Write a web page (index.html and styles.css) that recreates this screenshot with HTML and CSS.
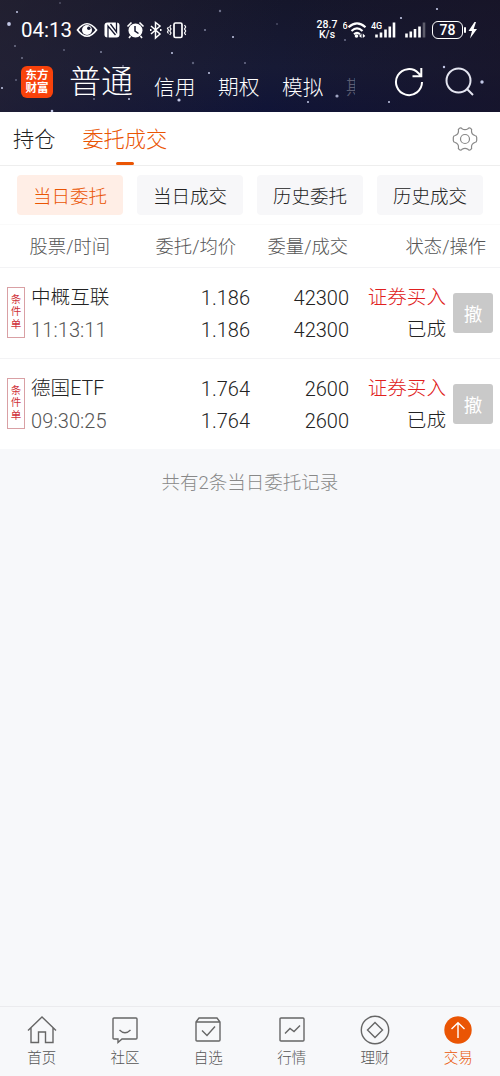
FILE: index.html
```
<!DOCTYPE html>
<html lang="zh-CN">
<head>
    <meta charset="UTF-8">
    <meta name="viewport" content="width=device-width, initial-scale=1.0">
    <title>委托成交</title>
    <link rel="stylesheet" href="styles.css">
</head>
<body>
    <div class="app">
        <header class="header">
            <svg class="stars" width="500" height="112" fill="#c3c8e6">
                <circle cx="9" cy="24" r="1.9"/><circle cx="17" cy="12" r="1"/><circle cx="60" cy="3" r=".8" opacity=".5"/>
                <circle cx="15" cy="46" r="1" opacity=".5"/><circle cx="2" cy="88" r="1"/><circle cx="172" cy="53" r="1"/>
                <circle cx="101" cy="52" r="1" opacity=".6"/><circle cx="205" cy="30" r="1" opacity=".6"/><circle cx="233" cy="37" r="1"/>
                <circle cx="220" cy="11" r="1.2" opacity=".5"/><circle cx="193" cy="63" r="1.2" opacity=".4"/><circle cx="209" cy="73" r="1"/>
                <circle cx="179" cy="100" r="1.6"/><circle cx="129" cy="99" r="1"/><circle cx="94" cy="99" r="1" opacity=".5"/>
                <circle cx="52" cy="111" r="1.3"/><circle cx="64" cy="50" r="1" opacity=".4"/><circle cx="245" cy="63" r="1" opacity=".5"/>
                <circle cx="437" cy="9" r="1.1"/><circle cx="401" cy="18" r="1.1"/><circle cx="444" cy="67" r="1.2"/>
                <circle cx="482" cy="82" r="1.7"/><circle cx="337" cy="96" r="1.6" opacity=".8"/><circle cx="308" cy="102" r="1"/>
                <circle cx="389" cy="102" r="1"/><circle cx="345" cy="40" r="1" opacity=".5"/><circle cx="277" cy="24" r="1" opacity=".3"/>
                <circle cx="22" cy="58" r="1" opacity=".5"/><circle cx="16" cy="80" r="1" opacity=".4"/><circle cx="123" cy="66" r="1" opacity=".5"/>
            </svg>
            <div class="status-bar">
                <span class="clock">04:13</span>
                <svg class="status-left" width="112" height="20" viewBox="0 0 112 20" fill="none" stroke="#fff">
                    <path d="M1.500 10Q11 -2.500 20.500 10Q11 22.500 1.500 10Z" stroke-width="1.700"/>
                    <circle cx="11" cy="10" r="5" fill="#fff" stroke="none"/><circle cx="12.800" cy="8.200" r="1.700" fill="#15172f" stroke="none"/>
                    <rect x="28.500" y="2.500" width="15" height="15" rx="3" fill="#fff" stroke="none"/>
                    <path d="M32 18V6l7.500 9M34.500 4l6 8V2" stroke="#15172f" stroke-width="1.300"/>
                    <circle cx="59.500" cy="10.500" r="7" fill="#fff" stroke="none"/>
                    <path d="M59 6v5l3.500 2.500" stroke="#15172f" stroke-width="1.500"/>
                    <path d="M51.500 6.500l4-4M67.500 6.500l-4-4M54.500 16l-1.500 2M64.500 16l1.500 2" stroke-width="1.600"/>
                    <path d="M75 6l9 8-4.500 4V2.500L84 6l-9 8" stroke-width="1.500"/>
                    <path d="M74 10h1.500M84 10h1.500" stroke-width="1.800"/>
                    <rect x="98" y="3" width="8" height="14.500" rx="1.500" stroke-width="1.700"/>
                    <path d="M95 5l-1.200 2 1.200 2-1.200 2 1.200 2-1.200 2M92.500 7l-1 1.500 1 1.500-1 2 1 1.500M108.500 5l1.200 2-1.200 2 1.200 2-1.200 2 1.200 2" stroke-width="1.200"/>
                </svg>
                <div class="net-speed"><span>28.7</span><span>K/s</span></div>
                <svg class="status-signal" width="84" height="22" viewBox="0 0 84 22" fill="none" stroke="#fff">
                    <text x="-.5" y="9.500" class="tiny">6</text>
                    <path d="M5.500 8.200Q14 .5 22.500 8.200M8.500 12Q14 6.700 19.500 12M11 15.200Q14 12.500 17 15.200" stroke-width="2.100"/>
                    <circle cx="13.500" cy="17" r="1.800" fill="#fff" stroke="none"/>
                    <path d="M18.500 14.500l-2.500 2.500 2.500 2zM19.800 14.500l2.500 2.500-2.500 2z" fill="#fff" stroke="none"/>
                    <text x="28" y="10" class="tiny">4G</text>
                    <path d="M33.500 18.500v-3M38 18.500v-5M42.500 18.500v-8M46.800 18.500v-11M51 18.500v-15M63.500 18.500v-4M67.800 18.500v-6M72 18.500v-8.500M76.500 18.500v-11" stroke-width="2.600"/>
                    <path d="M81 18.500v-15" stroke-width="2.600" opacity=".3"/>
                </svg>
                <div class="battery">78</div>
                <svg class="charging" width="14" height="20" viewBox="0 0 14 20" fill="#fff">
                    <rect x="0" y="7" width="2" height="6" rx="1"/>
                    <path d="M10.500 2L4.500 11h3.500l-2 7.500L13 9H9.700L12 2z"/>
                </svg>
            </div>
            <nav class="account-nav">
                <div class="logo"><span>东方</span><span>财富</span></div>
                <a class="account account-active">普通</a>
                <a class="account">信用</a>
                <a class="account">期权</a>
                <a class="account">模拟</a>
                <a class="account account-cut">期</a>
                <svg class="refresh" width="30" height="30" viewBox="0 0 30 30" fill="none" stroke="#fff" stroke-width="2">
                    <path d="M28 15A13 13 0 1 1 24.500 6.200L27 8.800M27.300 1v8.300H18.500"/>
                </svg>
                <svg class="search" width="30" height="30" viewBox="0 0 30 30" fill="none" stroke="#e4e5f0" stroke-width="2">
                    <circle cx="13.500" cy="13.500" r="12"/><path d="M22 22l6 6"/>
                </svg>
            </nav>
        </header>

        <nav class="tabs">
            <a class="tab">持仓</a>
            <a class="tab tab-active">委托成交</a>
            <svg class="settings" width="26" height="26" viewBox="0 0 26 26" fill="none" stroke="#888" stroke-width="1.200" stroke-linejoin="round">
                <path d="M7.500 2.200Q9 1.300 10 2.700Q13 4.700 16 2.700Q17 1.300 18.500 2.200Q20.300 3.300 19.500 5Q19.500 8.300 22.800 9.500Q24.700 9.700 24.700 11.500V14.500Q24.700 16.300 22.800 16.500Q19.500 17.700 19.500 21Q20.300 22.700 18.500 23.800Q17 24.700 16 23.300Q13 21.300 10 23.300Q9 24.700 7.500 23.800Q5.700 22.700 6.500 21Q6.500 17.700 3.200 16.500Q1.300 16.300 1.300 14.500V11.500Q1.300 9.700 3.200 9.500Q6.500 8.300 6.500 5Q5.700 3.300 7.500 2.200Z"/>
                <circle cx="13" cy="13" r="4.500"/>
            </svg>
        </nav>

        <div class="filters">
            <button class="filter filter-active">当日委托</button>
            <button class="filter">当日成交</button>
            <button class="filter">历史委托</button>
            <button class="filter">历史成交</button>
        </div>

        <div class="list-head">
            <span>股票/时间</span>
            <span>委托/均价</span>
            <span>委量/成交</span>
            <span>状态/操作</span>
        </div>

        <div class="order">
            <div class="tag"><span>条</span><span>件</span><span>单</span></div>
            <div class="cell name"><span>中概互联</span><span class="time">11:13:11</span></div>
            <div class="cell"><span>1.186</span><span>1.186</span></div>
            <div class="cell"><span>42300</span><span>42300</span></div>
            <div class="cell status"><span class="buy">证券买入</span><span>已成</span></div>
            <button class="cancel">撤</button>
        </div>
        <div class="order">
            <div class="tag"><span>条</span><span>件</span><span>单</span></div>
            <div class="cell name"><span>德国ETF</span><span class="time">09:30:25</span></div>
            <div class="cell"><span>1.764</span><span>1.764</span></div>
            <div class="cell"><span>2600</span><span>2600</span></div>
            <div class="cell status"><span class="buy">证券买入</span><span>已成</span></div>
            <button class="cancel">撤</button>
        </div>

        <p class="summary">共有2条当日委托记录</p>

        <nav class="bottom-nav">
            <a class="nav-item">
                <svg width="30" height="30" viewBox="0 0 30 30"><path d="M1 15.500L15 2l14 13.500M4 13v14.500h7.500V17h7v10.500H26V13"/></svg>
                <span>首页</span>
            </a>
            <a class="nav-item">
                <svg width="30" height="30" viewBox="0 0 30 30"><path d="M4 3h22q1 0 1 1v19q0 1-1 1H12l-4 3.500V24H4q-1 0-1-1V4q0-1 1-1zM9.500 15q5.500 5.500 11 0"/></svg>
                <span>社区</span>
            </a>
            <a class="nav-item">
                <svg width="30" height="30" viewBox="0 0 30 30"><path d="M3 7l3-4h18l3 4v18q0 1-1 1H4q-1 0-1-1zM3 7h24M9 15.500l5 5 8-9"/></svg>
                <span>自选</span>
            </a>
            <a class="nav-item">
                <svg width="30" height="30" viewBox="0 0 30 30"><path d="M4 3h22q1 0 1 1v21q0 1-1 1H4q-1 0-1-1V4q0-1 1-1zM8 18.500l5-5 4 3 6-6"/></svg>
                <span>行情</span>
            </a>
            <a class="nav-item">
                <svg width="30" height="30" viewBox="0 0 30 30"><circle cx="15" cy="15" r="13.700"/><path d="M15 7.500l7.500 7.500-7.500 7.500L7.500 15z"/></svg>
                <span>理财</span>
            </a>
            <a class="nav-item nav-active">
                <svg width="30" height="30" viewBox="0 0 30 30"><circle cx="15" cy="15" r="13.700"/><path d="M15 23V8M8.500 14L15 7.800l6.500 6.200"/></svg>
                <span>交易</span>
            </a>
        </nav>
    </div>
</body>
</html>
```
FILE: styles.css
```
* {
    box-sizing: border-box;
}

body {
    margin: 0;
    font-family: Roboto, "Noto Sans CJK SC", sans-serif;
    font-weight: 300;
    color: #222;
    background-color: #f7f8fa;
}

.app {
    display: flex;
    flex-direction: column;
    width: 500px;
    height: 1076px;
    overflow: hidden;
}

button {
    border: 0;
    padding: 0;
    font: inherit;
}

/* header */
.header {
    position: relative;
    height: 112px;
    color: #fff;
    background: linear-gradient(100deg, rgba(42, 38, 52, 0.6), rgba(20, 20, 45, 0) 55%, rgba(25, 20, 38, 0.6)), linear-gradient(#15162b, #171a35 60%, #101437);
}

.stars {
    position: absolute;
    left: 0;
    top: 0;
}

.status-bar {
    position: relative;
    display: flex;
    align-items: center;
    height: 60px;
    padding-left: 21px;
}

.clock {
    width: 52px;
    font-size: 20.5px;
    font-weight: 400;
}

.status-left {
    margin-left: 3px;
}

.net-speed {
    display: flex;
    flex-direction: column;
    align-items: center;
    width: 22px;
    margin-left: 128px;
    font-size: 10.5px;
    line-height: 10px;
    font-weight: 500;
}

.status-signal {
    margin-left: 5px;
}

.tiny {
    font-size: 9px;
    font-weight: 500;
    fill: #fff;
    stroke: none;
}

.battery {
    width: 31px;
    height: 18px;
    margin-left: 5px;
    border: 1.5px solid #fff;
    border-radius: 6px;
    font-size: 14px;
    font-weight: 500;
    line-height: 16px;
    text-align: center;
}

.charging {
    margin-left: 1px;
}

.account-nav {
    position: relative;
    display: flex;
    align-items: center;
    height: 44px;
    padding-left: 21px;
}

.logo {
    display: flex;
    flex-direction: column;
    width: 32px;
    height: 32px;
    padding-top: 3px;
    border-radius: 6px;
    background-color: #f8420b;
    font-size: 11.5px;
    font-weight: 700;
    line-height: 12.5px;
    text-align: center;
}

.account {
    width: 42px;
    margin: 11px 0 0 22px;
    font-size: 20.7px;
    line-height: 30px;
    white-space: nowrap;
}

.account-active {
    width: 64px;
    margin: -1px 0 0 16px;
    font-size: 32px;
}

.account-active + .account {
    margin-left: 21px;
}

.account-cut {
    width: 9px;
    overflow: hidden;
    opacity: 0.3;
}

.refresh {
    margin-left: 39px;
}

.search {
    margin-left: 21px;
}

/* tabs */
.tabs {
    display: flex;
    align-items: center;
    height: 54px;
    padding-left: 13px;
    background-color: #fff;
    border-bottom: 1px solid #eee;
}

.tab {
    display: flex;
    flex-direction: column;
    align-items: center;
    height: 54px;
    margin-right: 27px;
    font-size: 21.2px;
    line-height: 55px;
}

.tab-active {
    color: #ea5504;
}

.tab-active::after {
    content: "";
    width: 18px;
    height: 3px;
    margin-top: -5px;
    flex-shrink: 0;
    border-radius: 2px;
    background-color: #ea5504;
}

.settings {
    margin-left: 258px;
}

/* filters */
.filters {
    display: flex;
    gap: 14px;
    height: 59px;
    padding: 9px 17px 0;
    background-color: #fff;
    border-bottom: 1px solid #fafafa;
}

.filter {
    width: 106px;
    height: 40px;
    border-radius: 4px;
    font-size: 18.500px;
    color: #222;
    background-color: #f7f7f9;
}

.filter-active {
    color: #ea5504;
    background-color: #ffeee6;
}

/* orders */
.list-head {
    display: grid;
    grid-template-columns: 110px 126px 112px 138px;
    height: 42px;
    background-color: #fff;
    color: #555;
    font-size: 18.3px;
    line-height: 43px;
    text-align: right;
}

.order {
    display: grid;
    grid-template-columns: 18px 125px 100px 99px 97px 47px;
    align-items: center;
    height: 91px;
    padding-left: 7px;
    background-color: #fff;
    border-top: 1px solid #f3f3f5;
}

.tag {
    display: flex;
    flex-direction: column;
    align-items: center;
    height: 51px;
    margin-top: -2px;
    padding-top: 6px;
    border: 1px solid #d9a0a4;
    color: #cf3038;
    font-size: 10.500px;
    font-weight: 400;
    line-height: 12.500px;
}

.cell {
    display: flex;
    flex-direction: column;
    padding-top: 1px;
    text-align: right;
    font-size: 20px;
    line-height: 32px;
}

.name {
    padding-left: 6px;
    text-align: left;
    font-size: 19.6px;
}

.status {
    font-size: 19.6px;
}

.time {
    color: #555;
    font-size: 20px;
    letter-spacing: 0.1px;
}

.buy {
    color: #e02020;
}

.cancel {
    width: 40px;
    height: 40px;
    margin-left: 7px;
    border-radius: 3px;
    color: #fff;
    background-color: #c9c9c9;
    font-size: 18.500px;
    font-weight: 400;
}

.summary {
    margin: 21px 0 0;
    color: #888;
    font-size: 18.500px;
    line-height: 26px;
    text-align: center;
}

/* bottom nav */
.bottom-nav {
    display: grid;
    grid-template-columns: repeat(6, 1fr);
    height: 70px;
    margin-top: auto;
    border-top: 1px solid #ebebee;
}

.nav-item {
    display: flex;
    flex-direction: column;
    align-items: center;
    padding-top: 8px;
    color: #555;
    font-size: 14.500px;
    line-height: 28px;
}

.nav-item svg {
    fill: none;
    stroke: #666;
    stroke-width: 1.400;
}

.nav-active {
    color: #ea5504;
}

.nav-active circle {
    fill: #ea5504;
    stroke: none;
}

.nav-active path {
    stroke: #fff;
}
```
